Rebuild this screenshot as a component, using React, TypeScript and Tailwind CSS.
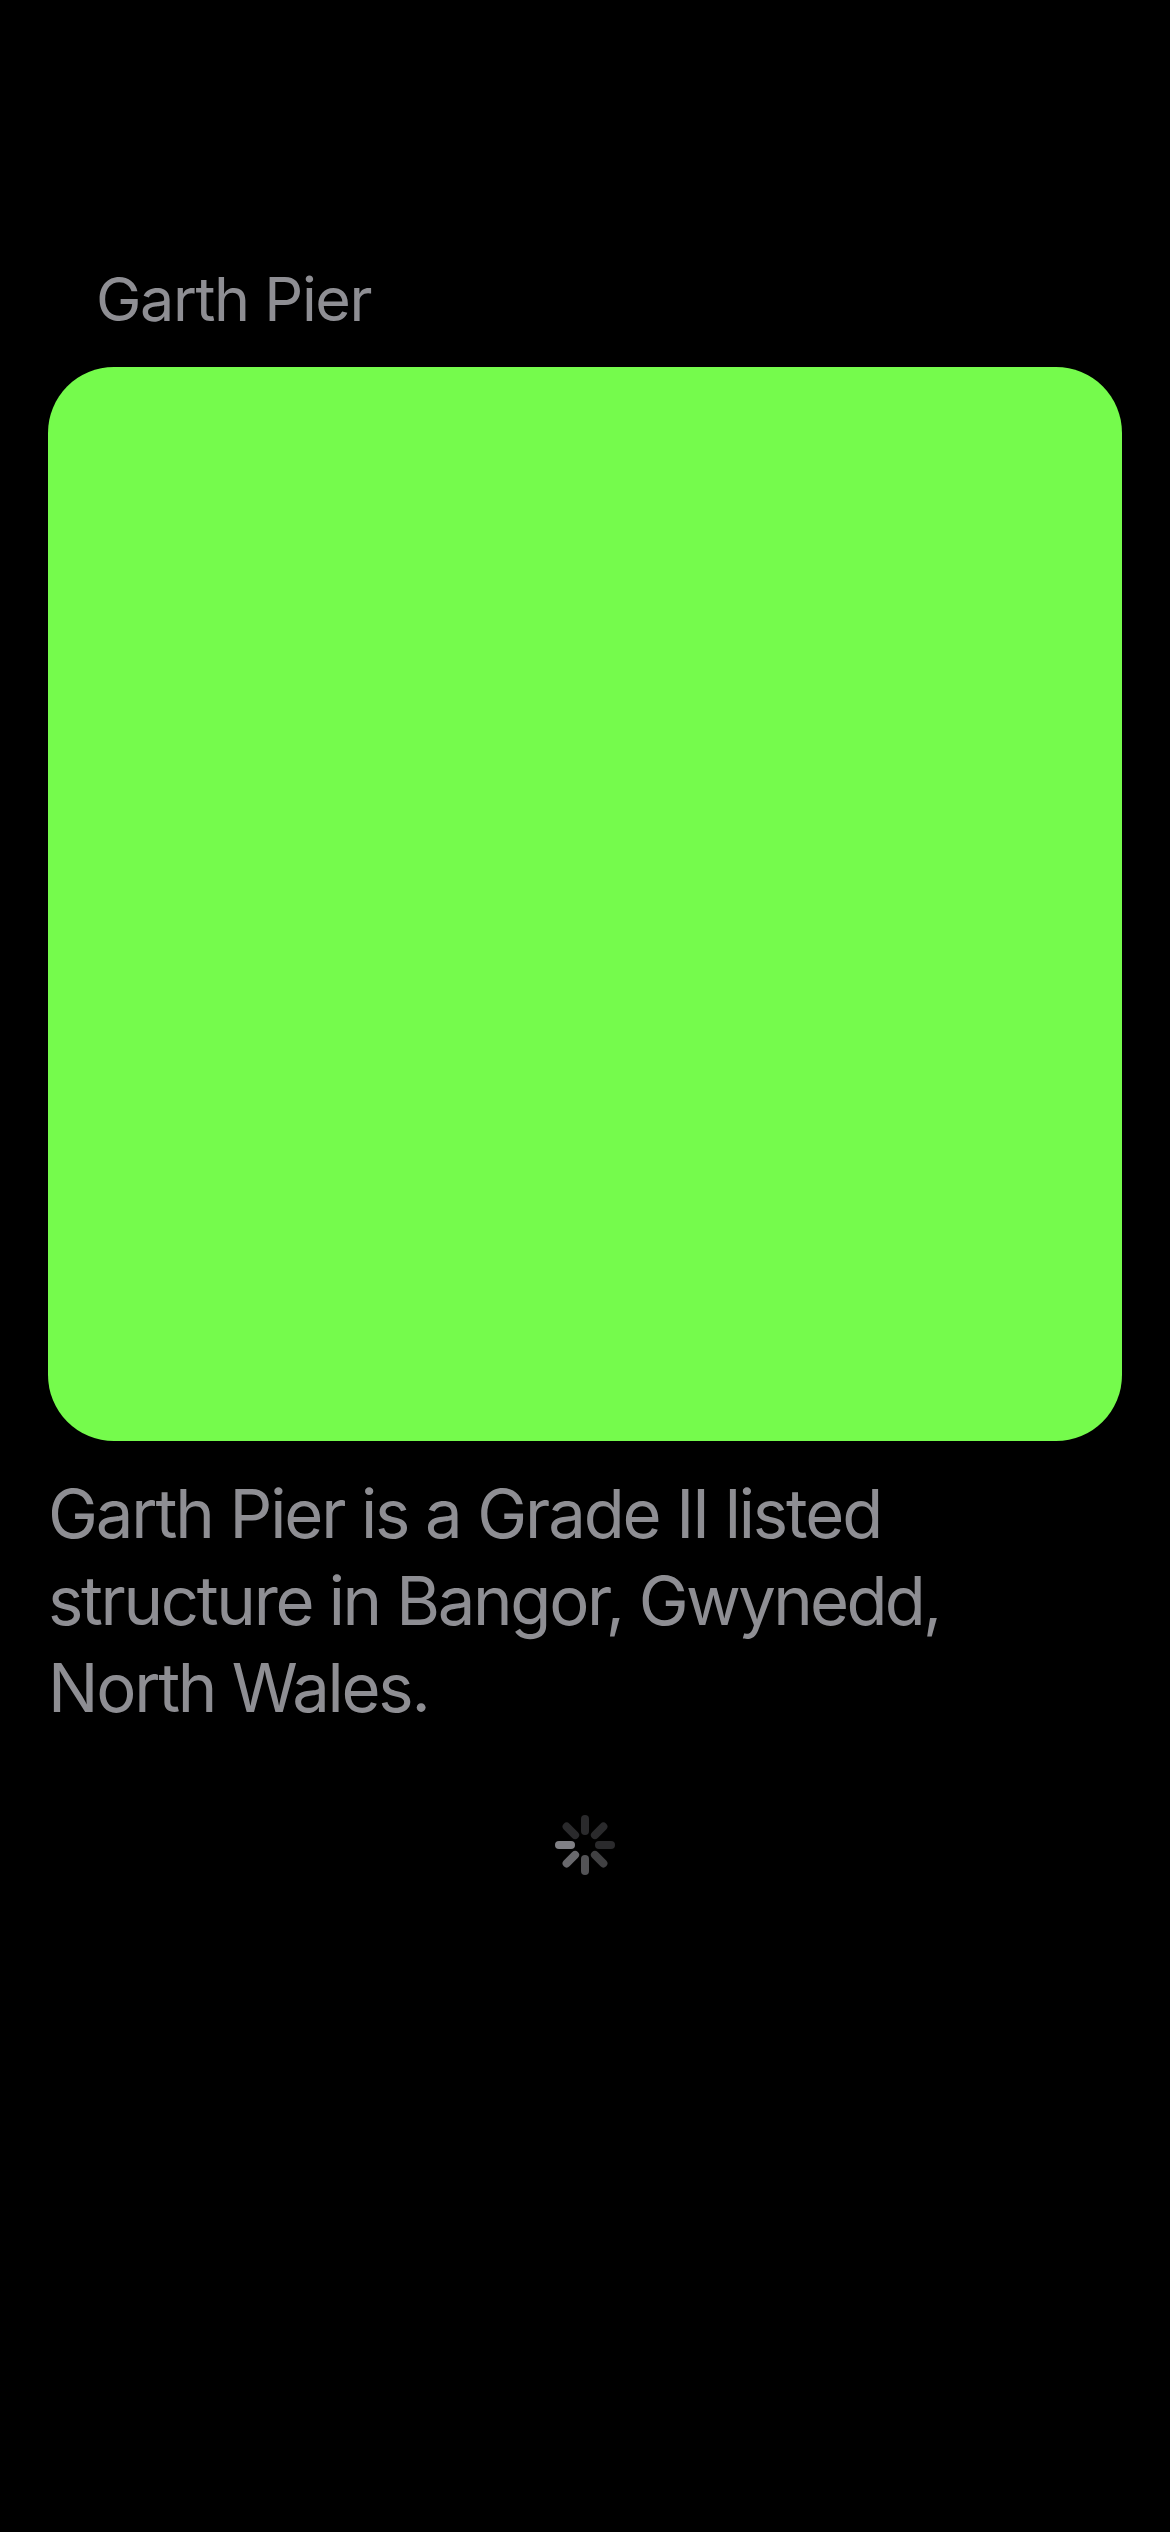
const spokes = [
  { angle: 0, color: '#2a2a2c' },
  { angle: 45, color: '#2a2a2c' },
  { angle: 90, color: '#2a2a2c' },
  { angle: 135, color: '#414143' },
  { angle: 180, color: '#535356' },
  { angle: 225, color: '#69696d' },
  { angle: 270, color: '#808085' },
  { angle: 315, color: '#2a2a2c' },
];

function Spinner() {
  return (
    <svg className="mt-[84px] self-center" width="60" height="60" viewBox="0 0 60 60" role="img" aria-label="Loading">
      {spokes.map((s) => (
        <rect
          key={s.angle}
          x="26"
          y="0"
          width="8"
          height="20"
          rx="4"
          fill={s.color}
          transform={`rotate(${s.angle} 30 30)`}
        />
      ))}
    </svg>
  );
}

export default function App() {
  return (
    <main className="flex h-[2532px] w-[1170px] flex-col bg-black px-12 pt-[264px] font-['Inter',sans-serif] text-[#8e8e93]">
      <h1 className="pl-12 text-[61px] leading-[70px] font-normal tracking-[-1.42px]">Garth Pier</h1>
      <div className="mt-[33px] h-[1074px] w-full rounded-[66px] bg-[#75fb4c]" />
      <p className="mt-[29px] text-[67px] leading-[87px]">
        <span className="block tracking-[-2.13px]">Garth Pier is a Grade II listed</span>
        <span className="block tracking-[-2.7px]">
          <span className="tracking-[-2.33px]">structure in Bangor,</span> Gwynedd,
        </span>
        <span className="block tracking-[-2.25px]">North Wales.</span>
      </p>
      <Spinner />
    </main>
  );
}
